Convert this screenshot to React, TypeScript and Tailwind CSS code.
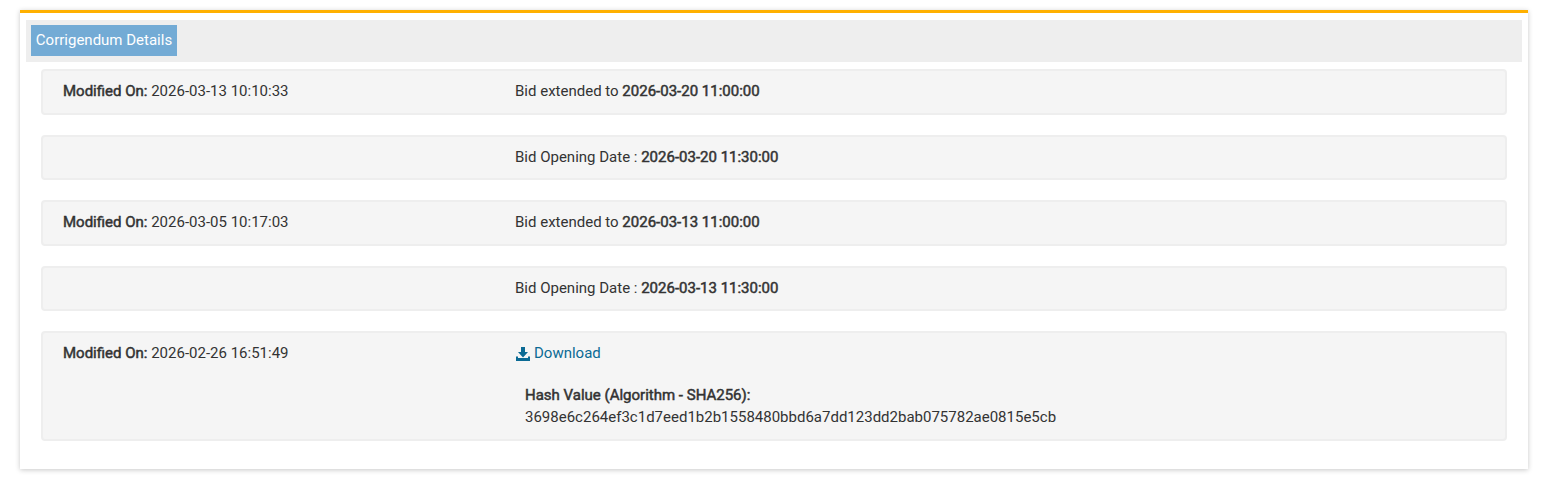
import React from "react";

const ROWS = [
  { modified: "2026-03-13 10:10:33", label: "Bid extended to ", value: "2026-03-20 11:00:00" },
  { modified: "", label: "Bid Opening Date : ", value: "2026-03-20 11:30:00" },
  { modified: "2026-03-05 10:17:03", label: "Bid extended to ", value: "2026-03-13 11:00:00" },
  { modified: "", label: "Bid Opening Date : ", value: "2026-03-13 11:30:00" },
];

function Modified({ value }: { value: string }) {
  return (
    <div className="w-[452px] shrink-0">
      {value && (
        <>
          <b className="font-normal [-webkit-text-stroke:0.5px]">Modified On:</b> {value}
        </>
      )}
    </div>
  );
}

export default function App() {
  return (
    <div className="bg-white pt-2.5 pr-[33px] pb-[13px] pl-5 font-['Roboto',sans-serif] text-[15px] leading-[21.43px] text-[#333333]">
      <div className="border-t-[3px] border-[#ffb000] bg-white px-1.5 pt-[7px] pb-7 shadow-[0_1px_5px_rgba(0,0,0,0.22)]">
        <div className="h-[42px] bg-[#eeeeee] p-[5px]">
          <div className="flex h-[31px] w-[146px] items-center justify-center bg-[#73abd5] text-white">
            Corrigendum Details
          </div>
        </div>

        <div className="mx-[15px] mt-[7px] flex flex-col gap-5">
          {ROWS.map((row, i) => (
            <div
              key={i}
              className="flex h-[45.5px] items-center rounded-[4px] border-2 border-[#eeeeee] bg-[#f5f5f5] pl-5"
            >
              <Modified value={row.modified} />
              <div>
                {row.label}
                <b className="font-normal [-webkit-text-stroke:0.5px]">{row.value}</b>
              </div>
            </div>
          ))}

          <div className="flex h-[110px] rounded-[4px] border-2 border-[#eeeeee] bg-[#f5f5f5] pt-2.5 pl-5">
            <Modified value="2026-02-26 16:51:49" />
            <div>
              <a className="flex items-center gap-1 text-[#0b6a94]">
                <svg width="14" height="14" viewBox="0 0 14 14" fill="currentColor" className="ml-px">
                  <path d="M5 0h4v5h3L7 10.5 2 5h3z" />
                  <path d="M0 9.5h2V11h10V9.5h2V14H0z" />
                </svg>
                Download
              </a>
              <div className="mt-[21px] ml-2.5">
                <b className="font-normal [-webkit-text-stroke:0.5px]">Hash Value (Algorithm - SHA256):</b>
                <div>3698e6c264ef3c1d7eed1b2b1558480bbd6a7dd123dd2bab075782ae0815e5cb</div>
              </div>
            </div>
          </div>
        </div>
      </div>
    </div>
  );
}
